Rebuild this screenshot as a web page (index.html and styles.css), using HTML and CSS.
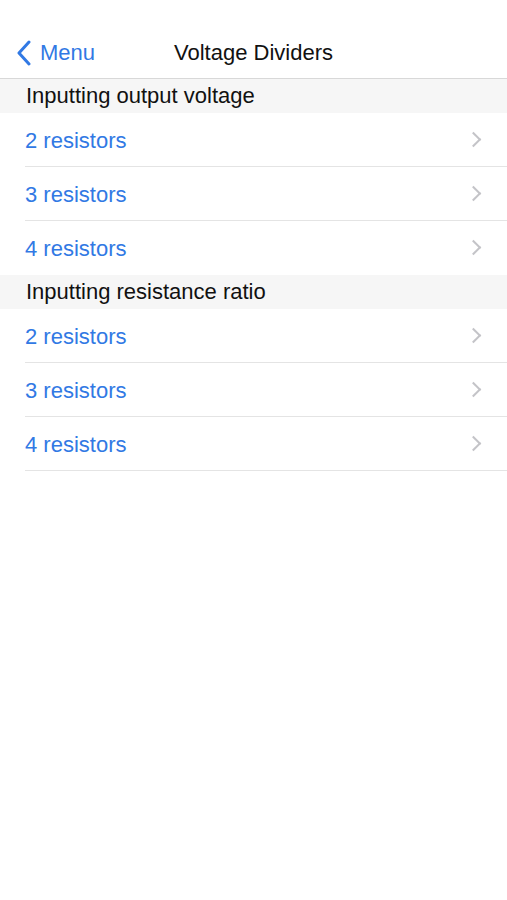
FILE: index.html
```html
<!DOCTYPE html>
<html lang="en">
<head>
    <meta charset="UTF-8">
    <meta name="viewport" content="width=device-width, initial-scale=1.0">
    <link rel="stylesheet" href="styles.css">
</head>
<body>

<nav class="navbar">
    <a class="back" href="#">
        <svg class="back-icon" width="16" height="26" viewBox="0 0 16 26">
            <path d="M13 2 L3 13 L13 24" fill="none" stroke="currentColor" stroke-width="3" stroke-linecap="round" stroke-linejoin="round"/>
        </svg>
        <span>Menu</span>
    </a>
    <h1 class="title">Voltage Dividers</h1>
</nav>

<div class="section-header">Inputting output voltage</div>
<ul class="list">
    <li class="row"><span>2 resistors</span><span class="chevron"></span></li>
    <li class="row"><span>3 resistors</span><span class="chevron"></span></li>
    <li class="row"><span>4 resistors</span><span class="chevron"></span></li>
</ul>

<div class="section-header">Inputting resistance ratio</div>
<ul class="list">
    <li class="row"><span>2 resistors</span><span class="chevron"></span></li>
    <li class="row"><span>3 resistors</span><span class="chevron"></span></li>
    <li class="row last"><span>4 resistors</span><span class="chevron"></span></li>
</ul>

</body>
</html>
```

FILE: styles.css
```css
body {
    margin: 0;
    font-family: "Liberation Sans", Arial, sans-serif;
    background-color: #fff;
    color: #111;
}

.navbar {
    height: 79px;
    border-bottom: 1px solid #d8d8d8;
    position: relative;
    box-sizing: border-box;
    display: flex;
    align-items: flex-end;
    padding: 0 0 12px 16px;
}

.back {
    display: flex;
    align-items: center;
    color: #3179e4;
    text-decoration: none;
    font-size: 22px;
    gap: 8px;
    position: relative;
    z-index: 1;
}

.back-icon {
    display: block;
}

.title {
    position: absolute;
    left: 0;
    right: 0;
    bottom: 12px;
    margin: 0;
    text-align: center;
    font-size: 22px;
    font-weight: normal;
    line-height: 26px;
    color: #111;
}

.section-header {
    background-color: #f6f6f6;
    height: 34px;
    line-height: 34px;
    padding-left: 26px;
    font-size: 22px;
    color: #111;
}

.list {
    list-style: none;
    margin: 0;
    padding: 0 0 0 25px;
}

.row {
    height: 54px;
    padding-top: 2px;
    display: flex;
    align-items: center;
    justify-content: space-between;
    color: #3179e4;
    font-size: 22px;
    border-bottom: 1px solid #e4e4e4;
    box-sizing: border-box;
}

.list .row:last-child {
    border-bottom: none;
}

.list .row.last {
    border-bottom: 1px solid #e4e4e4;
}

.chevron {
    width: 9px;
    height: 9px;
    border-top: 2px solid #c4c4c8;
    border-right: 2px solid #c4c4c8;
    transform: rotate(45deg);
    margin-right: 28px;
    margin-top: -3px;
}
```
